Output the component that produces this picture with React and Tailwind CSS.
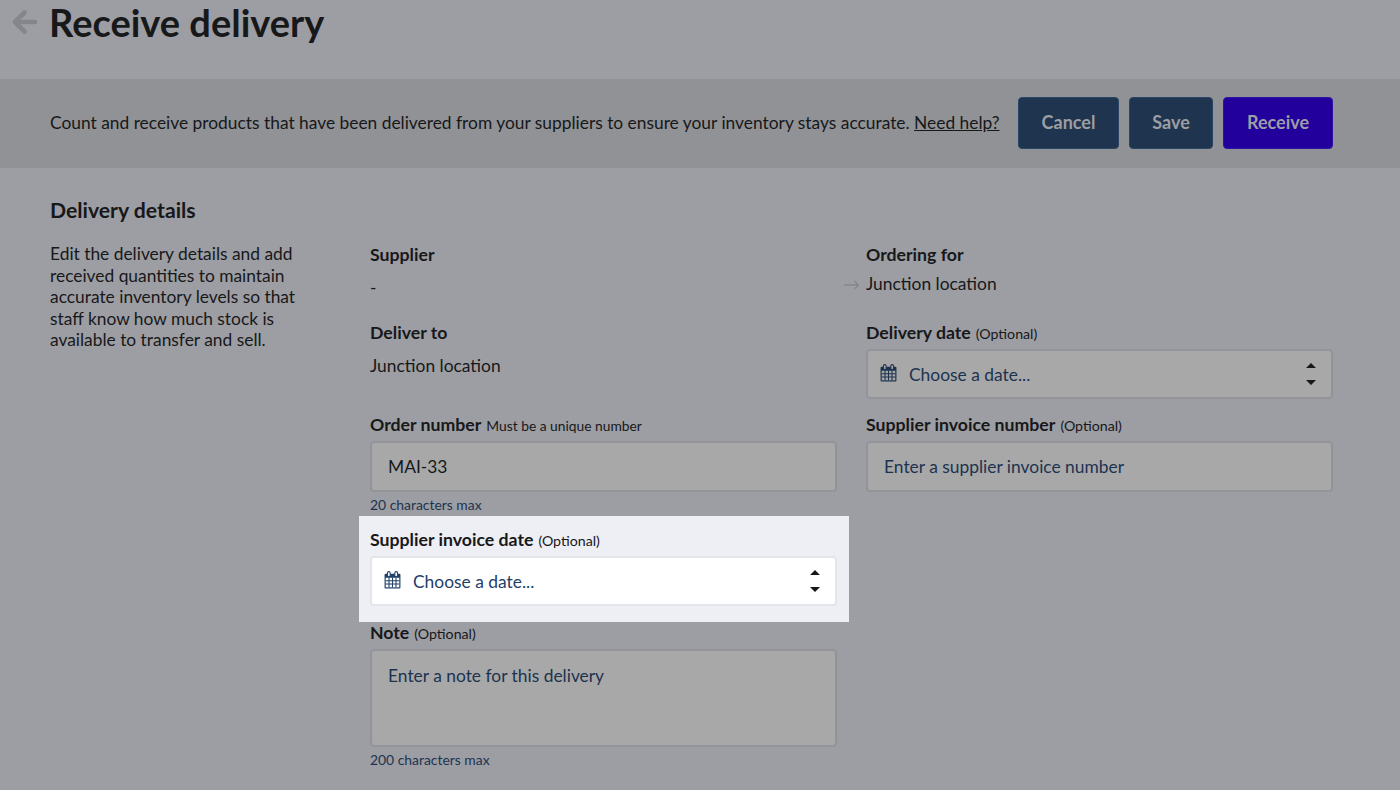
const Calendar = ({ className }) => (
  <svg viewBox="0 0 16 17" className={className} fill="none">
    <rect x="0.5" y="2.5" width="15" height="14" rx="1" fill="currentColor" />
    <rect x="1.6" y="6.4" width="12.8" height="9" fill="var(--cal-bg)" />
    <path d="M1.5 9.2h13M1.5 12.2h13M4.7 6.4v9M8 6.4v9M11.3 6.4v9" stroke="currentColor" strokeWidth="1" />
    <rect x="3.2" y="0.6" width="2.6" height="4.6" rx="1.3" fill="var(--cal-bg)" stroke="currentColor" strokeWidth="1" />
    <rect x="10.2" y="0.6" width="2.6" height="4.6" rx="1.3" fill="var(--cal-bg)" stroke="currentColor" strokeWidth="1" />
  </svg>
);

const Stepper = ({ className }) => (
  <svg viewBox="0 0 10 24" className={className} fill="currentColor">
    <path d="M5 1l5 5H0zM5 23l5-5H0z" />
  </svg>
);

const Label = ({ children, extra }) => (
  <div className="h-[22px] leading-[22px] text-[17.7px] font-bold text-[#17181a]">
    {children}
    {extra && <span className="ml-[5px] text-[14.2px] font-normal">{extra}</span>}
  </div>
);

const DateSelect = ({ active }) => (
  <div
    className={`mr-[-1px] flex h-[50px] items-center rounded-[4px] border-2 pl-3 pr-[15px] ${
      active
        ? 'border-[#e4e5ea] bg-white [--cal-bg:#ffffff] text-[#1f4068]'
        : 'border-[#939499] bg-[#a8a8a8] [--cal-bg:#a8a8a8] text-[#1c3350]'
    }`}
  >
    <Calendar className="mb-[3px] h-[18px] w-[17px]" />
    <span className="ml-[12px] pt-[2px] text-[17.4px]">Choose a date...</span>
    <Stepper className="ml-auto h-[24px] w-[10px] text-[#17181a]" />
  </div>
);

const TextBox = ({ children, className }) => (
  <div className={`mr-[-1px] rounded-[4px] border-2 border-[#939499] bg-[#a8a8a8] px-4 text-[17.4px] ${className}`}>
    {children}
  </div>
);

export default function App() {
  return (
    <div className="h-[790px] overflow-hidden bg-[#9d9ea3] font-['Lato',sans-serif] text-[#17181a]">
      <header className="flex h-[79px] items-start pl-3">
        <svg viewBox="0 0 26 26" className="mt-[9px] h-[26px] w-[26px] text-[#85868b]" fill="none" stroke="currentColor" strokeWidth="4.6" strokeLinecap="round" strokeLinejoin="round">
          <path d="M23 13H4M12.5 3.5L3 13l9.5 9.5" />
        </svg>
        <h1 className="ml-[11px] text-[38px] font-bold leading-[44px]">Receive delivery</h1>
      </header>

      <div className="flex h-[89px] items-center bg-[#919296] pb-[2px] pl-[50px] pr-[67px]">
        <p className="pt-[2px] text-[17.36px]">
          Count and receive products that have been delivered from your suppliers to ensure your inventory stays accurate. <span className="underline">Need help?</span>
        </p>
        <div className="ml-auto flex gap-[10px] text-[18px] font-bold text-[#9c9ea3]">
          <button className="h-[52px] w-[101px] rounded-[4px] border border-[#2a4565] bg-[#1f344e]">Cancel</button>
          <button className="h-[52px] w-[84px] rounded-[4px] border border-[#2a4565] bg-[#1f344e]">Save</button>
          <button className="h-[52px] w-[110px] rounded-[4px] border border-[#2f12a8] bg-[#22009c]">Receive</button>
        </div>
      </div>

      <section className="pl-[50px] pr-[67px] pt-[30px]">
        <h2 className="text-[21.2px] font-bold leading-[24px]">Delivery details</h2>
        <div className="mt-[22px] flex">
          <p className="-mt-px w-[320px] pr-[65px] text-[17.36px] leading-[21.5px]">
            Edit the delivery details and add received quantities to maintain accurate inventory levels so that staff know how much stock is available to transfer and sell.
          </p>

          <div className="grid w-[962px] grid-cols-[466px_466px] gap-x-[30px]">
            <div className="flex flex-col">
              <Label>Supplier</Label>
              <div className="mt-[9px] h-[22px] text-[17.4px]">-</div>
              <div className="mt-[25px]"><Label>Deliver to</Label></div>
              <div className="mt-[9px] h-[22px] text-[17.4px]">Junction location</div>
              <div className="mt-[39px] flex h-[22px] items-baseline">
                <Label>Order number</Label>
                <span className="ml-[5px] text-[13.8px]">Must be a unique number</span>
              </div>
              <TextBox className="mt-[5px] flex h-[51px] items-center pt-[2px]">MAI-33</TextBox>
              <div className="mt-[5px] h-[16px] text-[13.9px] leading-[16px] text-[#1c3350]">20 characters max</div>
              <div className="ml-[-11px] mr-[-13px] mt-[3px] h-[106px] bg-[#eeeff4] pl-[11px] pr-[13px] pt-[13px]">
                <Label extra="(Optional)">Supplier invoice date</Label>
                <div className="mt-[5px]"><DateSelect active /></div>
              </div>
              <Label extra="(Optional)">Note</Label>
              <TextBox className="mt-[5px] h-[98px] pt-[12px] text-[#1c3350]">Enter a note for this delivery</TextBox>
              <div className="mt-[5px] h-[16px] text-[13.9px] leading-[16px] text-[#1c3350]">200 characters max</div>
            </div>

            <div className="flex flex-col">
              <Label>Ordering for</Label>
              <div className="relative mt-[5px] h-[22px] text-[17.4px]">
                <svg viewBox="0 0 16 10" className="absolute left-[-22px] top-[9px] h-[10px] w-[16px] text-[#85868b]" fill="none" stroke="currentColor" strokeWidth="1.3">
                  <path d="M0 5h14.5M10.5 1l4 4-4 4" />
                </svg>
                Junction location
              </div>
              <div className="mt-[29px]"><Label extra="(Optional)">Delivery date</Label></div>
              <div className="mt-[5px]"><DateSelect /></div>
              <div className="mt-[15px]"><Label extra="(Optional)">Supplier invoice number</Label></div>
              <TextBox className="mt-[5px] flex h-[51px] items-center pt-[2px] text-[#1c3350]">Enter a supplier invoice number</TextBox>
            </div>
          </div>
        </div>
      </section>
    </div>
  );
}
